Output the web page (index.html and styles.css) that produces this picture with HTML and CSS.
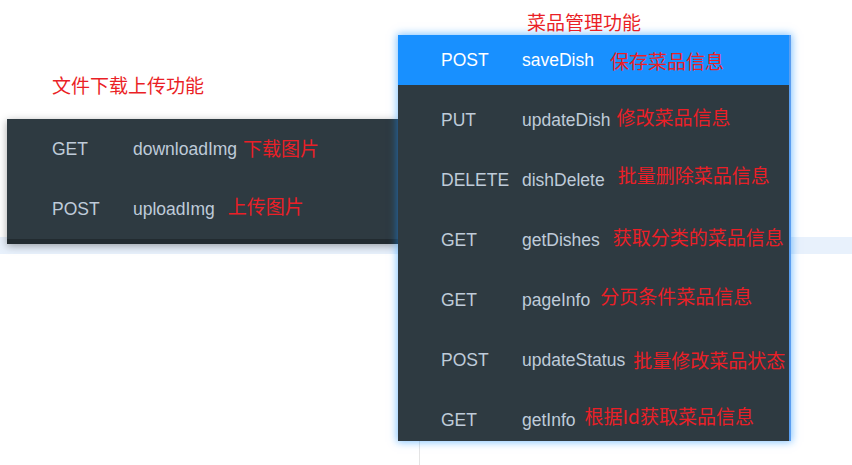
FILE: index.html
```html
<!DOCTYPE html>
<html lang="zh-CN">
<head>
<meta charset="utf-8">
<title>接口说明</title>
<link rel="stylesheet" href="styles.css">
</head>
<body>
<div class="stage">
  <section class="group group-file">
    <h2 class="title">文件下载上传功能</h2>
    <ul class="menu menu-file">
      <li class="item"><span class="method">GET</span><span class="name">downloadImg</span><span class="desc g6 dn1">下载图片</span></li>
      <li class="item"><span class="method">POST</span><span class="name">uploadImg</span><span class="desc g13 up1">上传图片</span></li>
    </ul>
  </section>
  <section class="group group-dish">
    <h2 class="title title-dish">菜品管理功能</h2>
    <ul class="menu menu-dish">
      <li class="item active"><span class="method">POST</span><span class="name">saveDish</span><span class="desc g16 dn3">保存菜品信息</span></li>
      <li class="item"><span class="method">PUT</span><span class="name">updateDish</span><span class="desc g6 up1">修改菜品信息</span></li>
      <li class="item"><span class="method">DELETE</span><span class="name">dishDelete</span><span class="desc g13 up3">批量删除菜品信息</span></li>
      <li class="item"><span class="method">GET</span><span class="name">getDishes</span><span class="desc g13 up1">获取分类的菜品信息</span></li>
      <li class="item"><span class="method">GET</span><span class="name">pageInfo</span><span class="desc g10 up2">分页条件菜品信息</span></li>
      <li class="item"><span class="method">POST</span><span class="name">updateStatus</span><span class="desc g8 dn2">批量修改菜品状态</span></li>
      <li class="item"><span class="method">GET</span><span class="name">getInfo</span><span class="desc g9 up2">根据Id获取菜品信息</span></li>
    </ul>
  </section>
</div>
</body>
</html>
```
FILE: styles.css
```css
html, body {
  margin: 0;
  padding: 0;
}

body {
  width: 852px;
  height: 465px;
  overflow: hidden;
  font-family: "Liberation Sans", Arial, "Noto Sans CJK SC", sans-serif;
  background-color: #ffffff;
  background-image:
    linear-gradient(#e4e4e4, #e4e4e4),
    linear-gradient(#e8f1fc, #e8f1fc);
  background-repeat: no-repeat, no-repeat;
  background-position: 419px 441px, 0 237px;
  background-size: 1px 24px, 100% 17px;
}

.stage {
  display: flex;
  align-items: flex-start;
  padding-left: 7px;
}

.group-file {
  width: 391px;
  padding-top: 72px;
}

.group-dish {
  position: relative;
  z-index: 1;
  padding-top: 9px;
}

.title {
  margin: 0;
  padding-left: 45px;
  font-family: "Noto Sans CJK SC", sans-serif;
  font-size: 19px;
  line-height: 26px;
  font-weight: normal;
  color: #ea1f27;
}

.title-dish {
  padding-left: 129px;
}

.menu {
  list-style: none;
  margin: 0;
  padding: 0;
  background: #2e3a41;
  color: #bfcbd9;
  font-size: 17.5px;
}

.menu-file {
  margin-top: 21px;
  border-bottom: 5px solid #222b30;
  box-shadow: 0 2px 8px rgba(0, 0, 0, 0.35);
}

.menu-dish {
  width: 391px;
  height: 406px;
  overflow: hidden;
  border-right: 2px solid #5a9ef0;
  box-shadow: 0 0 8px 1px rgba(24, 144, 255, 0.55);
}

.item {
  white-space: nowrap;
  height: 60px;
  line-height: 60px;
  padding-left: 45px;
}

.menu-dish .item {
  height: 50px;
  line-height: 50px;
  margin-bottom: 10px;
  padding-left: 43px;
}

.item.active {
  background: #1890ff;
  color: #ffffff;
}

.method {
  display: inline-block;
  width: 81px;
}

.desc {
  font-family: "Noto Sans CJK SC", sans-serif;
  font-size: 19px;
  line-height: 20px;
  color: #ea1f27;
}

.g6 { margin-left: 6px; }
.g8 { margin-left: 8px; }
.g9 { margin-left: 9px; }
.g10 { margin-left: 10px; }
.g13 { margin-left: 13px; }
.g16 { margin-left: 16px; }

.up1 { vertical-align: 1px; }
.up2 { vertical-align: 2px; }
.up3 { vertical-align: 3px; }
.dn1 { vertical-align: -1px; }
.dn2 { vertical-align: -2px; }
.dn3 { vertical-align: -3px; }
```
